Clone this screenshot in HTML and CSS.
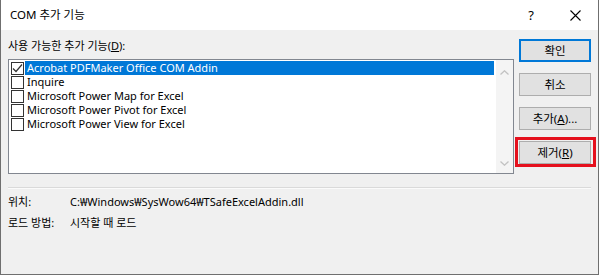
FILE: index.html
```html
<html lang="ko">
 <head>
  <meta charset="UTF-8">
  <meta name="viewport" content="width=device-width, initial-scale=1.0">
  <title>COM 추가 기능</title>
  <link rel="stylesheet" href="styles.css">
 </head>
 <body>
  <div class="dialog">
   <div class="titlebar">
    <span class="title">COM 추가 기능</span>
    <div class="title-buttons">
     <span class="tb-btn help">?</span>
     <span class="tb-btn close">
      <svg width="11" height="11" viewBox="0 0 11 11"><path d="M0.5 0.5 L10.5 10.5 M10.5 0.5 L0.5 10.5" stroke="#000" stroke-width="1.1" fill="none"/></svg>
     </span>
    </div>
   </div>
   <div class="dialog-body">
    <div class="main">
     <div class="left">
      <div class="label">사용 가능한 추가 기능(<u>D</u>):</div>
      <div class="listbox">
       <ul class="items">
        <li class="item selected">
         <span class="check"><svg width="11" height="11" viewBox="0 0 11 11"><path d="M1 5.5 L4 8.5 L10 1.5" stroke="#333" stroke-width="1.2" fill="none"/></svg></span>
         <span class="item-text">Acrobat PDFMaker Office COM Addin</span>
        </li>
        <li class="item"><span class="check"></span><span class="item-text">Inquire</span></li>
        <li class="item"><span class="check"></span><span class="item-text">Microsoft Power Map for Excel</span></li>
        <li class="item"><span class="check"></span><span class="item-text">Microsoft Power Pivot for Excel</span></li>
        <li class="item"><span class="check"></span><span class="item-text">Microsoft Power View for Excel</span></li>
       </ul>
       <div class="scrollbar">
        <span class="arrow"><svg width="9" height="5" viewBox="0 0 9 5"><path d="M0.5 4.5 L4.5 0.8 L8.5 4.5" stroke="#c2c2c2" stroke-width="1.3" fill="none"/></svg></span>
        <span class="arrow"><svg width="9" height="5" viewBox="0 0 9 5"><path d="M0.5 0.5 L4.5 4.2 L8.5 0.5" stroke="#c2c2c2" stroke-width="1.3" fill="none"/></svg></span>
       </div>
      </div>
     </div>
     <div class="buttons">
      <div class="btn default">확인</div>
      <div class="btn">취소</div>
      <div class="btn">추가(<u>A</u>)...</div>
      <div class="btn marked">제거(<u>R</u>)</div>
     </div>
    </div>
    <div class="separator"></div>
    <div class="info">
     <div class="info-label">위치:</div>
     <div class="info-value">C:₩Windows₩SysWow64₩TSafeExcelAddin.dll</div>
     <div class="info-label">로드 방법:</div>
     <div class="info-value">시작할 때 로드</div>
    </div>
   </div>
  </div>
 </body>
</html>
```

FILE: styles.css
```css
* {
    margin: 0;
    padding: 0;
    box-sizing: border-box;
    font-family: 'Noto Sans', 'Noto Sans CJK KR', sans-serif;
}

body {
    background: white;
    font-size: 11px;
    color: #000;
}

.dialog {
    width: 599px;
    height: 275px;
    background: #f0f0f0;
    border: 1px solid #6f6f6f;
    border-top: none;
    display: flex;
    flex-direction: column;
}

.titlebar {
    height: 30px;
    background: white;
    display: flex;
    align-items: center;
    justify-content: space-between;
    padding-left: 9px;
}

.title {
    font-size: 11.5px;
    line-height: 16px;
}

.title-buttons {
    display: flex;
    height: 30px;
}

.tb-btn {
    width: 46px;
    height: 30px;
    display: flex;
    align-items: center;
    justify-content: center;
}

.help {
    font-size: 13px;
    padding-left: 4px;
}

.dialog-body {
    flex: 1;
    padding: 8px 7px 0 7px;
}

.main {
    display: flex;
    gap: 5px;
}

.left {
    flex: 1;
}

.label {
    line-height: 15px;
    height: 15px;
    margin-bottom: 6px;
}

.listbox {
    height: 115px;
    background: white;
    border: 1px solid #828790;
    display: flex;
}

.items {
    list-style: none;
    flex: 1;
    padding: 1px 1px 0 2px;
}

.item {
    height: 14px;
    display: flex;
    align-items: center;
}

.check {
    width: 13px;
    height: 13px;
    border: 1px solid #333;
    background: white;
    display: flex;
    align-items: center;
    justify-content: center;
    flex-shrink: 0;
}

.item-text {
    flex: 1;
    height: 14px;
    line-height: 14px;
    padding-left: 2px;
    margin-left: 1px;
    white-space: nowrap;
}

.item.selected .item-text {
    background: #0078d7;
    color: white;
}

.scrollbar {
    width: 17px;
    margin-left: 1px;
    background: #f4f4f4;
    display: flex;
    flex-direction: column;
    justify-content: space-between;
    padding: 8px 0 6px 0;
}

.arrow {
    height: 8px;
    display: flex;
    align-items: center;
    justify-content: center;
}

.buttons {
    width: 72px;
    margin-top: 1px;
    display: flex;
    flex-direction: column;
    gap: 11px;
}

.btn {
    height: 23px;
    background: #e1e1e1;
    border: 1px solid #adadad;
    display: flex;
    align-items: center;
    justify-content: center;
    font-size: 11.5px;
    line-height: 15px;
    position: relative;
}

.btn.default {
    border-color: #0078d7;
    box-shadow: inset 0 0 0 1px #0078d7;
}

.btn.marked::after {
    content: '';
    position: absolute;
    top: -5px;
    left: -5px;
    right: -6px;
    bottom: -4px;
    border: 3px solid #e5101d;
}

.separator {
    height: 2px;
    margin-top: 13px;
    border-top: 1px solid #dadada;
    border-bottom: 1px solid #fbfbfb;
}

.info {
    display: grid;
    grid-template-columns: 62px 1fr;
    margin-top: 2px;
    line-height: 21px;
}
```
